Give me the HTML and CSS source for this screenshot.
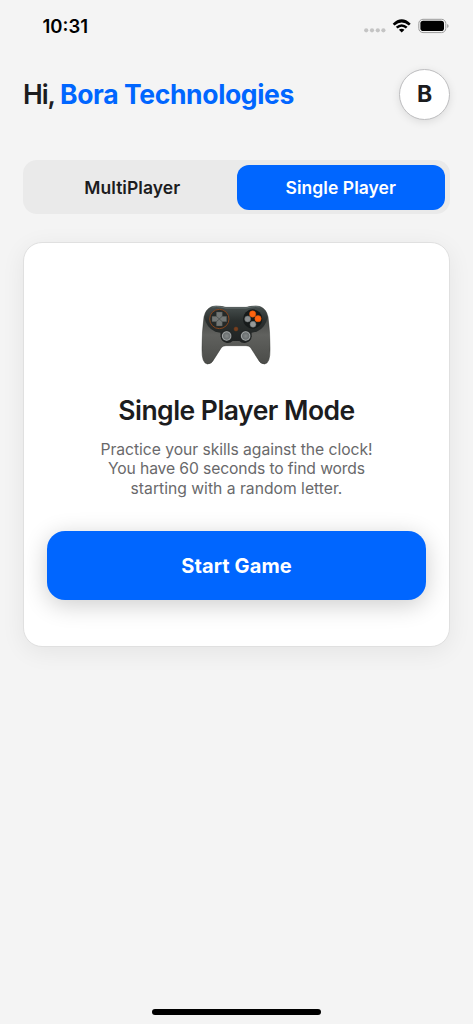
FILE: index.html
```html
<!DOCTYPE html>
<html lang="en">
<head>
<meta charset="utf-8">
<title>Single Player</title>
<link rel="stylesheet" href="styles.css">
</head>
<body>
<div class="screen">
  <div class="status">
    <span class="time">10:31</span>
    <svg class="status-icons" viewBox="0 0 90 20" width="90" height="20">
      <g fill="#c4c4c4"><circle cx="6.2" cy="13.3" r="2.1"/><circle cx="12" cy="13.3" r="2.1"/><circle cx="17.8" cy="13.3" r="2.1"/><circle cx="23.4" cy="13.3" r="2.1"/></g>
      <path d="M32.7 6.7 34.5 8.5Q41.7 2.3 48.9 8.5L50.7 6.7Q41.7-2.2 32.7 6.7ZM35.8 9.8 37.6 11.6Q41.7 8.1 45.8 11.6L47.6 9.8Q41.7 4.6 35.8 9.8ZM38.9 12.8 41.7 15.4 44.5 12.8Q41.7 10.6 38.9 12.8Z" fill="#000"/>
      <rect x="58.8" y="2.3" width="27" height="13.3" rx="4.2" fill="none" stroke="#9b9b9b"/>
      <rect x="60.4" y="3.8" width="23.6" height="10.3" rx="2.8" fill="#000"/>
      <path d="M87.2 7Q88.6 7.7 88.6 9T87.2 11Z" fill="#9b9b9b"/>
    </svg>
  </div>
  <header class="header">
    <h1 class="greeting">Hi, <span class="name">Bora Technologies</span></h1>
    <div class="avatar">B</div>
  </header>
  <nav class="tabs">
    <div class="tab">MultiPlayer</div>
    <div class="tab active">Single Player</div>
  </nav>
  <main class="card">
    <svg class="controller" viewBox="0 0 276 240" width="92" height="80">
      <defs>
        <linearGradient id="body" x1="0" y1="0" x2="0" y2="1"><stop offset="0" stop-color="#343836"/><stop offset=".5" stop-color="#60615e"/><stop offset="1" stop-color="#4b4c49"/></linearGradient>
        <linearGradient id="panel" x1="0" y1="0" x2="0" y2="1"><stop offset="0" stop-color="#48504f"/><stop offset=".4" stop-color="#2a2f2e"/><stop offset="1" stop-color="#1f2222"/></linearGradient>
        <radialGradient id="stick"><stop offset="0" stop-color="#858989"/><stop offset=".65" stop-color="#6b7071"/><stop offset=".85" stop-color="#a3a7a7"/><stop offset="1" stop-color="#555959"/></radialGradient>
      </defs>
      <path d="M65 35Q78 31 92 34L108 37H168L184 34Q199 31 211 35Q229 42 234 66Q240 108 240 161Q241 205 224 207Q211 208 203 191L182 158Q178 152 168 152H108Q98 152 94 158L73 191Q65 208 52 207Q35 205 36 161Q36 108 42 66Q47 42 65 35Z" fill="url(#body)" stroke="#343633" stroke-width="1.5"/>
      <path d="M64 36Q79 31 92 34L108 37H168L184 34Q198 31 212 36Q228 43 233 66Q227 99 200 110L185 113Q184 142 165 144Q154 145 148 138H128Q122 145 111 144Q92 142 91 113L76 110Q49 99 43 66Q48 43 64 36Z" fill="url(#panel)"/>
      <path d="M67 36Q79 33 92 36L108 39H168L184 36Q198 33 209 36" fill="none" stroke="#667170" stroke-width="3"/>
      <circle cx="88" cy="72" r="29" fill="#252a29" stroke="#86451d" stroke-width="3"/>
      <g fill="#737775" stroke="#414644" stroke-width="1"><path d="M79 51H97V64L88 72 79 64Z"/><path d="M79 93H97V80L88 72 79 80Z"/><path d="M66 64H79L88 72 79 80H66Z"/><path d="M110 64H97L88 72 97 80H110Z"/></g>
      <circle cx="188" cy="72" r="29" fill="#161a1a"/>
      <g stroke-width="1.5"><circle cx="188" cy="57" r="9.5" fill="#ff6410" stroke="#d95508"/><circle cx="204" cy="71" r="9.5" fill="#ff6410" stroke="#d95508"/><circle cx="173" cy="72" r="9" fill="#8c9091" stroke="#686e6e"/><circle cx="189" cy="88" r="9" fill="#969999" stroke="#686e6e"/></g>
      <circle cx="138" cy="102" r="6" fill="#8d4820" stroke="#5d3219" stroke-width="2"/><circle cx="138" cy="102" r="2" fill="#4b3122"/>
      <circle cx="110" cy="124" r="18" fill="#202323"/><circle cx="167" cy="124" r="18" fill="#202323"/>
      <circle cx="110" cy="123" r="15" fill="url(#stick)"/><circle cx="167" cy="123" r="15" fill="url(#stick)"/>
    </svg>
    <h2 class="title">Single Player Mode</h2>
    <p class="description"><span class="l1">Practice your skills against the clock!</span><br><span class="l2">You have 60 seconds to find words</span><br><span class="l3">starting with a random letter.</span></p>
    <div class="start">Start Game</div>
  </main>
  <div class="home-indicator"></div>
</div>
</body>
</html>
```
FILE: styles.css
```css
* { box-sizing: border-box; margin: 0; padding: 0; }
body { background: #f4f4f4; font-family: Inter, sans-serif; color: #1c1c1e; }
.screen { width: 473px; height: 1024px; display: flex; flex-direction: column; padding: 0 23px; overflow: hidden; }
.status { height: 69px; display: flex; justify-content: space-between; padding: 16px 0 0 19.5px; }
.time { font-size: 18.5px; line-height: 20px; font-weight: 600; color: #000; letter-spacing: 0; }
.status-icons { margin-top: 1px; }
.header { height: 50px; display: flex; align-items: center; justify-content: space-between; }
.greeting { font-size: 26.5px; line-height: 34px; font-weight: 600; letter-spacing: -1.05px; white-space: nowrap; }
.name { color: #06f; font-weight: 650; letter-spacing: -.37px; }
.avatar { width: 51px; height: 51px; border: 1px solid #bebec0; border-radius: 50%; background: #fff; display: flex; align-items: center; justify-content: center; font-size: 23px; font-weight: 650; box-shadow: 0 2px 9px rgba(0,0,0,.1); }
.tabs { height: 54px; margin-top: 41px; background: #eaeaea; border-radius: 14px; padding: 5px 5px 4px; display: flex; }
.tab { flex: 1; display: flex; align-items: center; justify-content: center; font-size: 17.5px; font-weight: 600; letter-spacing: .05px; white-space: nowrap; border-radius: 12px; }
.active { background: #06f; color: #fff; }
.card { height: 405px; margin-top: 28px; padding: 52px 23px 0; display: flex; flex-direction: column; align-items: center; background: #fff; border: 1px solid #e0e0e0; border-radius: 19px; box-shadow: 0 5px 24px rgba(0,0,0,.065); }
.controller { flex: none; margin-right: 2px; }
.title { margin-top: 18px; font-size: 26.5px; line-height: 34px; font-weight: 600; letter-spacing: -.52px; white-space: nowrap; }
.description { margin-top: 13px; font-size: 15.7px; line-height: 19.3px; letter-spacing: -.05px; color: #69696b; text-align: center; white-space: nowrap; }
.l2 { letter-spacing: -.12px; }
.l3 { letter-spacing: 0; }
.start { width: 379px; height: 69px; margin-top: 33px; padding-top: 1px; border-radius: 18px; background: #06f; color: #fff; display: flex; align-items: center; justify-content: center; font-size: 20px; font-weight: 700; letter-spacing: .1px; box-shadow: 0 5px 24px rgba(0,0,0,.2); }
.home-indicator { width: 169px; height: 6px; margin: auto auto 9px; border-radius: 3px; background: #000; }
```
